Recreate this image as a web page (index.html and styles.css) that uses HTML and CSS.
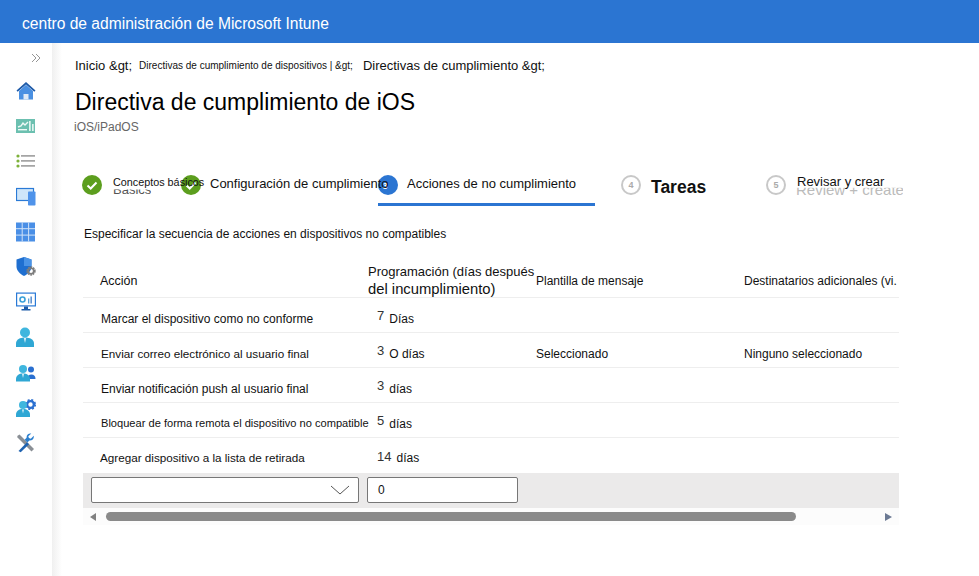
FILE: index.html
```html
<!DOCTYPE html>
<html lang="es">
<head>
<meta charset="utf-8">
<title>Directiva de cumplimiento de iOS</title>
<link rel="stylesheet" href="styles.css">
</head>
<body>
<header class="topbar">centro de administración de Microsoft Intune</header>
<div class="shell">
  <nav class="sidebar">
    <svg class="collapse" width="10" height="10" viewBox="0 0 10 10" fill="none" stroke="#8a8a8a" stroke-width="0.9"><path d="M1 1l4 4-4 4M5 1l4 4-4 4"/></svg>
    <div class="nav-icons">
      <svg width="20" height="20" viewBox="0 0 20 20"><path d="M3 10l7-6.3 7 6.3v9H3z" fill="#4a90e2"/><path d="M10 1L0.500 9.500l1.200 1.200L10 3.500l8.300 7.200 1.200-1.200z" fill="#1e5aa8"/><rect x="7.500" y="13" width="5" height="6" fill="#dfeaf6"/><rect x="3" y="18.200" width="14" height="0.800" fill="#b8d4f0"/></svg>
      <svg width="20" height="16" viewBox="0 0 20 16"><rect width="19" height="14" y="1" fill="#6cc0b0"/><path d="M2 9l3-1 2-3 2 2 3-3" fill="none" stroke="#eef9f6" stroke-width="1.400"/><rect x="2" y="11" width="9" height="1.400" fill="#eef9f6"/><rect x="13" y="3" width="1.700" height="10" fill="#e0f4ef"/><rect x="16" y="6" width="1.700" height="7" fill="#e0f4ef"/></svg>
      <svg width="20" height="14" viewBox="0 0 20 14"><g fill="#7db13a"><circle cx="2" cy="2" r="1.600"/><circle cx="2" cy="7" r="1.600"/><circle cx="2" cy="12" r="1.600"/></g><g fill="#8f8f8f"><rect x="5" y="1.200" width="14" height="1.400"/><rect x="5" y="6.200" width="14" height="1.400"/><rect x="5" y="11.200" width="14" height="1.400"/></g></svg>
      <svg width="20" height="18" viewBox="0 0 20 18"><rect x="0.500" y="0.500" width="17" height="12" fill="#cfe6fa" stroke="#2a7ad6" stroke-width="1.200"/><rect x="12" y="3.500" width="7.500" height="14" rx="0.800" fill="#4f93ea"/></svg>
      <svg width="19" height="19" viewBox="0 0 19 19"><rect width="19" height="19" fill="#4a8fe6"/><path d="M6.200 0v19M12.600 0v19M0 6.200h19M0 12.600h19" stroke="#cfe2f8" stroke-width="1"/></svg>
      <svg width="20" height="20" viewBox="0 0 20 20"><path d="M8 0l7.500 2.600v6.600c0 4.600-3.500 7.800-7.500 9.800-4-2-7.500-5.200-7.500-9.800V2.600z" fill="#1f6fd0"/><path d="M8 0l7.500 2.600V9H8z" fill="#4a93e6"/><circle cx="15" cy="14" r="3.600" fill="none" stroke="#7d7d7d" stroke-width="2.200" stroke-dasharray="1.600 0.700"/><circle cx="15" cy="14" r="2.700" fill="none" stroke="#7d7d7d" stroke-width="1.600"/></svg>
      <svg width="20" height="19" viewBox="0 0 20 19"><rect x="0.600" y="0.600" width="18.800" height="12.800" fill="#fff" stroke="#2a7ad6" stroke-width="1.200"/><circle cx="6.500" cy="7" r="2.500" fill="none" stroke="#3aa0d8" stroke-width="1.600"/><rect x="12" y="6" width="1.300" height="5" fill="#5aa0d8"/><rect x="14.500" y="4" width="1.300" height="7" fill="#3a7ac8"/><path d="M8 14h4v2.500h2.500V18h-9v-1.500H8z" fill="#1d5ba8"/></svg>
      <svg width="18" height="20" viewBox="0 0 18 20"><circle cx="9" cy="5.500" r="5" fill="#3fb6de"/><path d="M0 20v-3.500C0 12.500 4 10.500 9 10.500s9 2 9 6V20z" fill="#2fa7d4"/><path d="M7.800 11h2.400L9 16z" fill="#d9f0f8"/></svg>
      <svg width="20" height="17" viewBox="0 0 20 17"><circle cx="15" cy="5" r="3" fill="#2a6fd0"/><path d="M11 14.500c0-3 2-4.500 4.500-4.500s4 1.500 4 4.500z" fill="#2a6fd0"/><circle cx="7" cy="4.500" r="4" fill="#3fb6de"/><path d="M0 17v-2.500C0 11 3 9 7 9s7 2 7 5.500V17z" fill="#2fa7d4"/><path d="M6 9.500h2L7 13.500z" fill="#d9f0f8"/></svg>
      <svg width="20" height="18" viewBox="0 0 20 18"><circle cx="14.500" cy="5.500" r="3.400" fill="none" stroke="#2a6fd0" stroke-width="2.400"/><circle cx="14.500" cy="5.500" r="4.800" fill="none" stroke="#2a6fd0" stroke-width="1.600" stroke-dasharray="2 1.800"/><circle cx="7" cy="6" r="4" fill="#3fb6de"/><path d="M0 18v-2.500C0 12 3 10 7 10s7 2 7 5.500V18z" fill="#2fa7d4"/><path d="M6 10.500h2L7 14.500z" fill="#d9f0f8"/></svg>
      <svg width="19" height="19" viewBox="0 0 19 19"><path d="M2 2l1.500-1L18 15.500 15.500 18 1 3.500z" fill="#8a8f95"/><path d="M2.500 17.500L11 8.800l2 2-8.300 8z" fill="#1f63b0"/><path d="M17.800 2.200l-3 3-1.900-.6-.6-1.900 3-2.700c-2.700-.6-5 1.500-4.700 4.200l-2 2 2.800 2.800 2-2c2.700.3 4.800-2 4.400-4.800z" fill="#2a7fcf"/></svg>
    </div>
  </nav>
  <main class="content">
    <div class="crumbs">
      <span>Inicio &amp;gt;</span>
      <span class="crumb-small">Directivas de cumplimiento de dispositivos | &amp;gt;</span>
      <span class="crumb-last">Directivas de cumplimiento &amp;gt;</span>
    </div>
    <h1 class="title">Directiva de cumplimiento de iOS</h1>
    <div class="subtitle">iOS/iPadOS</div>
    <div class="steps">
      <div class="step step-1">
        <svg class="badge" viewBox="0 0 20 20"><circle cx="10" cy="10" r="10" fill="#5c9e1e"/><path d="M5.500 10.500l3.200 3 5.800-6" fill="none" stroke="#fff" stroke-width="2"/></svg>
        <span class="ghost">Basics</span>
        <span class="step-label over">Conceptos básicos</span>
      </div>
      <div class="step step-2">
        <svg class="badge" viewBox="0 0 20 20"><circle cx="10" cy="10" r="10" fill="#5c9e1e"/><path d="M5.500 10.500l3.200 3 5.800-6" fill="none" stroke="#fff" stroke-width="2"/></svg>
        <span class="step-label big">Configuración de cumplimiento</span>
      </div>
      <div class="step step-3">
        <span class="badge num-active">3</span>
        <span class="step-label big">Acciones de no cumplimiento</span>
      </div>
      <div class="step step-4">
        <span class="badge num">4</span>
        <span class="step-tareas">Tareas</span>
      </div>
      <div class="step step-5">
        <span class="badge num">5</span>
        <span class="ghost ghost-review">Review + create</span>
        <span class="step-label over over-big">Revisar y crear</span>
      </div>
    </div>
    <p class="lead">Especificar la secuencia de acciones en dispositivos no compatibles</p>
    <div class="table">
      <div class="row head">
        <div class="c-action c-head">Acción</div>
        <div class="c-sched">Programación (días después <span class="sched-2">del incumplimiento)</span></div>
        <div class="c-tpl">Plantilla de mensaje</div>
        <div class="c-rec">Destinatarios adicionales (vi.</div>
      </div>
      <div class="row">
        <div class="c-action">Marcar el dispositivo como no conforme</div>
        <div class="c-sched"><span class="n">7</span>Días</div>
        <div></div><div></div>
      </div>
      <div class="row">
        <div class="c-action tight">Enviar correo electrónico al usuario final</div>
        <div class="c-sched"><span class="n">3</span>O días</div>
        <div class="c-tpl">Seleccionado</div>
        <div class="c-rec">Ninguno seleccionado</div>
      </div>
      <div class="row">
        <div class="c-action">Enviar notificación push al usuario final</div>
        <div class="c-sched"><span class="n">3</span>días</div>
        <div></div><div></div>
      </div>
      <div class="row">
        <div class="c-action narrow">Bloquear de forma remota el dispositivo no compatible</div>
        <div class="c-sched"><span class="n">5</span>días</div>
        <div></div><div></div>
      </div>
      <div class="row last">
        <div class="c-action tight add">Agregar dispositivo a la lista de retirada</div>
        <div class="c-sched"><span class="n">14</span>días</div>
        <div></div><div></div>
      </div>
      <div class="add-row">
        <div class="select"><svg width="20" height="10" viewBox="0 0 20 10" fill="none" stroke="#555" stroke-width="1"><path d="M1 1l9 8 9-8"/></svg></div>
        <div class="input">0</div>
      </div>
      <div class="scroll">
        <span class="arrow-l"></span>
        <span class="thumb"></span>
        <span class="arrow-r"></span>
      </div>
    </div>
  </main>
</div>
</body>
</html>
```
FILE: styles.css
```css
* { box-sizing: border-box; }
html, body { margin: 0; height: 100%; }
body { font-family: "Liberation Sans", Arial, sans-serif; color: #111; background: #fff; overflow: hidden; }
.topbar { height: 43px; background: #2b75d2; color: #fff; font-size: 15.6px; line-height: 47px; padding-left: 22px; }
.shell { display: flex; height: 533px; }
.sidebar { width: 52px; flex: none; background: #fff; display: flex; flex-direction: column; padding-top: 10px; }
.collapse { margin: 0 0 0 31px; display: block; }
.nav-icons { margin-top: 18px; display: flex; flex-direction: column; }
.nav-icons svg { display: block; height: 20px; margin: 0 0 15.2px 16px; }
.content { flex: 1; min-width: 0; padding: 14px 0 0 23px; background: linear-gradient(to right, #f0f0f0, #fff 10px); }
.crumbs { display: flex; align-items: center; gap: 7px; font-size: 13px; height: 16px; }
.crumb-small { font-size: 10px; }
.crumb-last { margin-left: 3px; }
.title { margin: 15px 0 0; font-size: 23px; font-weight: 400; line-height: 29px; color: #000; }
.subtitle { font-size: 12px; color: #666; line-height: 16px; margin-left: -1px; margin-top: 2px; }
.steps { display: flex; margin-top: 33px; height: 38px; margin-left: 7px; font-size: 12px; }
.step { position: relative; display: flex; align-items: flex-start; height: 38px; }
.badge { width: 20px; height: 20px; flex: none; margin-top: 7px; }
.step-1 { width: 99px; }
.step-2 { width: 197px; }
.step-3 { width: 217px; padding-left: 1px; border-bottom: 3px solid #2b75d2; }
.step-4 { width: 171px; padding-left: 26px; }
.step-5 { width: 137px; }
.step-label { white-space: nowrap; position: relative; z-index: 1; }
.over { position: absolute; top: 8px; left: 31px; font-size: 10.8px; line-height: 13px; }
.over-big { font-size: 13px; top: 7px; }
.big { margin-left: 9px; margin-top: 8px; font-size: 13px; line-height: 16px; }
.ghost { position: absolute; left: 31px; top: 14px; font-size: 13px; line-height: 15px; color: #555; clip-path: inset(50% 0 0 0); }
.ghost-review { left: 30px; top: 13px; color: #bbb; font-size: 15px; line-height: 17px; width: 107px; overflow: hidden; white-space: nowrap; clip-path: inset(40% 0 0 0); }
.num, .num-active { border-radius: 50%; display: flex; align-items: center; justify-content: center; font-size: 9px; font-weight: 700; }
.num { border: 2px solid #c8c8c8; color: #aaa; }
.num-active { background: #2b75d2; color: #fff; margin-left: -1px; padding: 2px 6px 0 0; }
.step-tareas { margin-left: 10px; margin-top: 9px; font-size: 17.5px; font-weight: 700; line-height: 20px; color: #111; }
.lead { margin: 20px 0 0 9px; font-size: 12px; line-height: 16px; }
.table { margin: 11px 0 0 8px; width: 816px; font-size: 12px; }
.row { display: grid; grid-template-columns: 285px 168px 208px 155px; height: 35px; align-items: center; border-bottom: 1px solid #eee; padding-top: 8px; white-space: nowrap; }
.row.head { height: 45px; padding-top: 0; }
.row.last { height: 35px; border-bottom: 0; padding-top: 6px; }
.c-action { padding-left: 18px; }
.c-head { font-size: 12.5px; padding-left: 17px; }
.head .c-head, .head .c-tpl, .head .c-rec { padding-top: 10px; }
.narrow { font-size: 11.1px; position: relative; top: -1px; }
.tight { font-size: 11.7px; position: relative; top: -1px; }
.add { padding-left: 17px; }
.c-sched { white-space: nowrap; position: relative; top: -1px; }
.n { display: inline-block; position: relative; top: -3px; font-size: 13px; margin: 0 5px 0 9px; color: #333; }
.last .n { top: -1px; }
.head .c-sched { top: 0; font-size: 13px; line-height: 17px; align-self: start; margin-top: 10px; }
.sched-2 { display: block; font-size: 14.8px; line-height: 18px; }
.add-row { background: #ebeaea; height: 35px; display: flex; align-items: flex-start; gap: 8px; padding: 4px 0 0 8px; }
.select { width: 268px; height: 26px; background: #fff; border: 1px solid #777; border-radius: 2px; display: flex; align-items: center; justify-content: flex-end; padding-right: 8px; }
.input { width: 151px; height: 26px; background: #fff; border: 1px solid #777; border-radius: 2px; font-size: 12px; line-height: 24px; padding-left: 10px; }
.scroll { height: 17px; background: #fcfcfc; display: flex; align-items: center; padding-left: 7px; }
.arrow-l { width: 0; height: 0; border: 4px solid transparent; border-right: 6px solid #808080; border-left: 0; }
.arrow-r { width: 0; height: 0; border: 4px solid transparent; border-left: 7px solid #6c7a94; border-right: 0; margin-left: 89px; }
.thumb { width: 690px; height: 9px; background: #8a8a8a; border-radius: 5px; margin-left: 10px; }
```
